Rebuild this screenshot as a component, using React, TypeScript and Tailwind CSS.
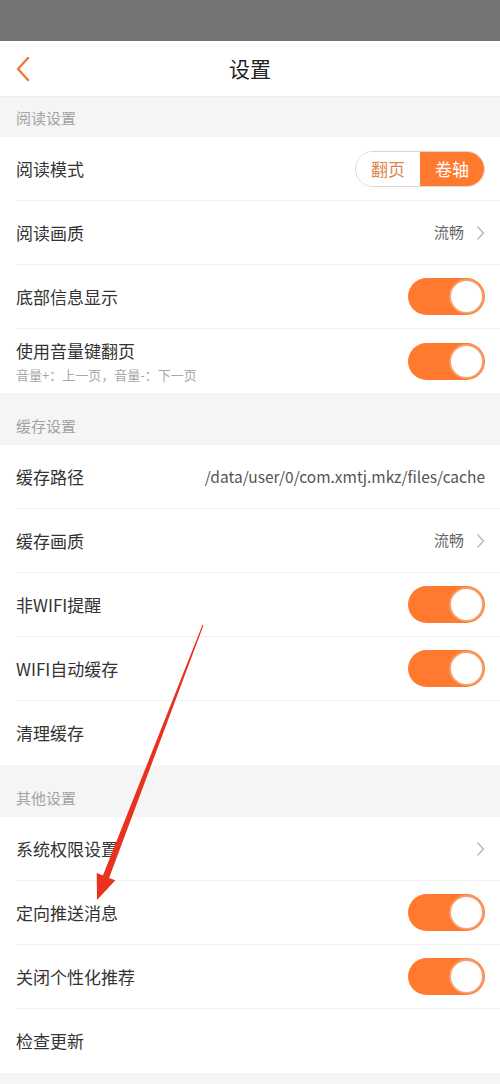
import React from "react";

const font = { fontFamily: '"Noto Sans CJK SC", "Noto Sans", sans-serif' };

function Toggle() {
  return (
    <div className="w-[77px] h-[37px] rounded-full bg-[#ff7a2f] flex justify-end items-center pr-[1px]">
      <div className="w-[35px] h-[35px] rounded-full bg-white border-2 border-[#f5a06e]" />
    </div>
  );
}

function Chevron() {
  return (
    <svg width="9" height="16" viewBox="0 0 9 16" className="ml-[12px]">
      <path d="M1.5 1.5 L7.5 8 L1.5 14.5" fill="none" stroke="#b5b5b5" strokeWidth="1.3" />
    </svg>
  );
}

function Section({ title, first }: { title: string; first?: boolean }) {
  return (
    <div className={"bg-[#f5f5f5] flex items-end px-4 pb-[10px] " + (first ? "h-[40px]" : "h-[52px]")}>
      <span className="text-[15px] leading-[18px] text-[#a3a3a3]">{title}</span>
    </div>
  );
}

function Row({
  label,
  sub,
  right,
  last,
}: {
  label: string;
  sub?: string;
  right?: React.ReactNode;
  last?: boolean;
}) {
  return (
    <div className="bg-white pl-4">
      <div
        className={
          "h-16 flex items-center justify-between pr-[15px] " +
          (last ? "" : "border-b border-[#f2f2f2]")
        }
      >
        <div className="flex flex-col">
          <span className="text-[17px] leading-[22px] text-[#333]">{label}</span>
          {sub && <span className="text-[13px] leading-[17px] text-[#a8a8a8] mt-[4px]">{sub}</span>}
        </div>
        {right}
      </div>
    </div>
  );
}

function Value({ text }: { text: string }) {
  return (
    <div className="flex items-center">
      <span className="text-[15px] text-[#666]">{text}</span>
      <Chevron />
    </div>
  );
}

export default function App() {
  return (
    <div className="relative w-[500px] h-[1084px] bg-[#f5f5f5] overflow-hidden" style={font}>
      <div className="h-[41px] bg-[#757575]" />
      <div className="h-[56px] bg-white border-b border-[#eeeeee] flex items-center relative">
        <svg width="16" height="26" viewBox="0 0 16 26" className="ml-[15px]">
          <path d="M13 2 L3 13 L13 24" fill="none" stroke="#f07a32" strokeWidth="2.4" strokeLinecap="round" strokeLinejoin="round" />
        </svg>
        <span className="absolute left-0 right-0 text-center text-[21px] text-[#222] pointer-events-none">设置</span>
      </div>

      <Section title="阅读设置" first />
      <div className="bg-white pl-4">
        <div className="h-[64px] flex items-center justify-between pr-[15px] border-b border-[#f2f2f2]">
          <span className="text-[17px] leading-[22px] text-[#333]">阅读模式</span>
          <div className="flex h-[36px] w-[130px] rounded-full overflow-hidden border border-[#e2d6cc]">
            <div className="flex-1 flex items-center justify-center bg-white text-[17px] text-[#e0854d]">翻页</div>
            <div className="flex-1 flex items-center justify-center bg-[#ff7a2f] text-[17px] text-white">卷轴</div>
          </div>
        </div>
      </div>
      <Row label="阅读画质" right={<Value text="流畅" />} />
      <Row label="底部信息显示" right={<Toggle />} />
      <Row label="使用音量键翻页" sub="音量+：上一页，音量-：下一页" right={<Toggle />} last />

      <Section title="缓存设置" />
      <Row
        label="缓存路径"
        right={<span className="text-[15.5px] text-[#555]">/data/user/0/com.xmtj.mkz/files/cache</span>}
      />
      <Row label="缓存画质" right={<Value text="流畅" />} />
      <Row label="非WIFI提醒" right={<Toggle />} />
      <Row label="WIFI自动缓存" right={<Toggle />} />
      <Row label="清理缓存" last />

      <Section title="其他设置" />
      <Row label="系统权限设置" right={<Chevron />} />
      <Row label="定向推送消息" right={<Toggle />} />
      <Row label="关闭个性化推荐" right={<Toggle />} />
      <Row label="检查更新" last />

      <svg className="absolute inset-0 pointer-events-none" width="500" height="1084" viewBox="0 0 500 1084">
        <polygon
          points="203.5,625.2 202.5,624.8 102.9,875.5 96.7,873.1 97,900 115.3,880.3 109.1,877.9"
          fill="#e8321f"
        />
      </svg>
    </div>
  );
}
